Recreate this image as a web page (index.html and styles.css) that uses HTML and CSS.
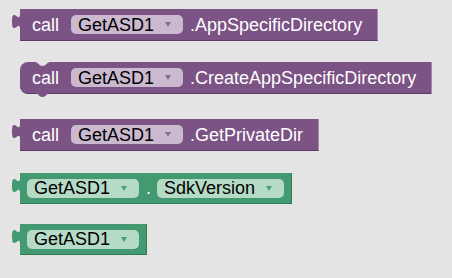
FILE: index.html
```html
<!DOCTYPE html>
<html lang="en">
<head>
    <meta charset="UTF-8">
    <title>Blocks</title>
    <link rel="stylesheet" href="styles.css">
</head>
<body>
    <div class="workspace">
        <!-- call method, value block -->
        <div class="block method value b1">
            <svg class="tab" viewBox="0 0 9 15" width="9" height="15"><path d="M9 0 C9 10 1 -8 1 7.5 S9 5 9 15 Z"/></svg>
            <span class="label">call</span>
            <span class="pill">GetASD1<i class="arrow"></i></span>
            <span class="label method-name">.AppSpecificDirectory</span>
        </div>

        <!-- call method, statement block -->
        <div class="block method statement b2">
            <svg class="notch" viewBox="0 0 15 5" width="15" height="5"><path d="M0 0 C3 0 4 4 7.5 4 S12 0 15 0 Z"/></svg>
            <svg class="next" viewBox="0 0 15 5" width="15" height="5"><path d="M0 0 C3 0 4 4 7.5 4 S12 0 15 0 Z"/></svg>
            <span class="label">call</span>
            <span class="pill">GetASD1<i class="arrow"></i></span>
            <span class="label method-name">.CreateAppSpecificDirectory</span>
        </div>

        <div class="block method value b3">
            <svg class="tab" viewBox="0 0 9 15" width="9" height="15"><path d="M9 0 C9 10 1 -8 1 7.5 S9 5 9 15 Z"/></svg>
            <span class="label">call</span>
            <span class="pill">GetASD1<i class="arrow"></i></span>
            <span class="label method-name">.GetPrivateDir</span>
        </div>

        <!-- property getter -->
        <div class="block getter value b4">
            <svg class="tab" viewBox="0 0 9 15" width="9" height="15"><path d="M9 0 C9 10 1 -8 1 7.5 S9 5 9 15 Z"/></svg>
            <span class="pill">GetASD1<i class="arrow"></i></span>
            <span class="label dot">.</span>
            <span class="pill prop">SdkVersion<i class="arrow"></i></span>
        </div>

        <!-- component -->
        <div class="block getter value b5">
            <svg class="tab" viewBox="0 0 9 15" width="9" height="15"><path d="M9 0 C9 10 1 -8 1 7.5 S9 5 9 15 Z"/></svg>
            <span class="pill">GetASD1<i class="arrow"></i></span>
        </div>
    </div>
</body>
</html>
```

FILE: styles.css
```css
body {
    margin: 0;
    background: #e4e4e4;
    font-family: 'Liberation Sans', Arial, sans-serif;
    width: 452px;
    height: 278px;
    overflow: hidden;
}
.workspace {
    display: flex;
    flex-direction: column;
    align-items: flex-start;
    padding: 9px 0 0 20px;
}
.block {
    position: relative;
    display: flex;
    align-items: center;
    box-sizing: border-box;
    height: 32px;
    font-size: 18px;
    color: #fff;
    white-space: nowrap;
}
.method {
    background: #7c5385;
    padding: 0 15px 0 12px;
    border-bottom: 1px solid #5e3b66;
    border-right: 1px solid #a58bab;
}
.method .tab path,
.method .next path {
    fill: #7c5385;
}
.getter {
    background: #439970;
    padding: 0 7px;
    height: 31px;
    border-bottom: 1px solid #2f7a55;
    border-right: 1px solid #2f7a55;
}
.getter .tab path {
    fill: #439970;
}
.tab {
    position: absolute;
    left: -9px;
    top: 5px;
}
.notch {
    position: absolute;
    left: 15px;
    top: 0;
}
.notch path {
    fill: #e4e4e4;
}
.next {
    position: absolute;
    left: 15px;
    bottom: -5px;
}
.statement {
    border-radius: 8px 0 0 8px;
}
.label {
    line-height: 1;
}
.pill {
    display: flex;
    align-items: center;
    height: 19px;
    padding: 0 12px 0 7px;
    margin-right: 7px;
    border-radius: 5px;
    background: #cab9cf;
    color: #000;
    line-height: 1;
}
.method .pill {
    margin-left: 12px;
}
.getter .pill {
    background: #b5dac6;
    margin-right: 0;
}
.arrow {
    display: inline-block;
    margin-left: 11px;
    width: 0;
    height: 0;
    border-left: 3.5px solid transparent;
    border-right: 3.5px solid transparent;
    border-top: 5px solid #8a6c92;
}
.getter .arrow {
    border-top-color: #46a074;
}
.dot {
    margin: 0 6px 0 7px;
}
.b2 {
    margin-top: 21px;
}
.b3 {
    margin-top: 25px;
}
.b4 {
    margin-top: 22px;
}
.b5 {
    margin-top: 20px;
}
```
